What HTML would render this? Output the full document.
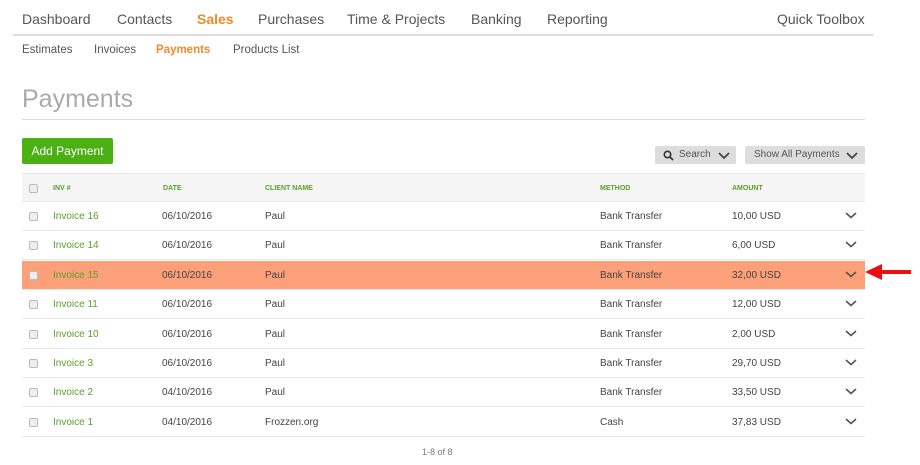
<!DOCTYPE html>
<html><head><meta charset="utf-8"><style>
*{margin:0;padding:0;box-sizing:border-box}
body{width:920px;height:465px;background:#fff;font-family:"Liberation Sans",sans-serif;color:#555;position:relative;overflow:hidden}
.a{position:absolute;white-space:nowrap}
.nav{top:11px;font-size:14px;color:#555}
.sub{top:44px;font-size:11.5px;color:#555}
.or{color:#f08a2e;font-weight:bold}
.row{position:absolute;left:22px;width:843px;height:29px;border-bottom:1.5px solid #e8e8e8;font-size:10px;color:#444}
.row span{position:absolute;top:9px}
.cb{position:absolute;left:7px;top:10px;width:9px;height:9px;border:1px solid #bbb;border-radius:2px;background:#eee}
.g{color:#5aa02c}
.chev{position:absolute;left:823px;top:8px}
.h span{font-size:7px;font-weight:bold;color:#5aa02c;top:11px}
</style></head><body>
<div class="a nav" style="left:22px">Dashboard</div>
<div class="a nav" style="left:117px">Contacts</div>
<div class="a nav or" style="left:197px">Sales</div>
<div class="a nav" style="left:258px">Purchases</div>
<div class="a nav" style="left:347px">Time &amp; Projects</div>
<div class="a nav" style="left:471px">Banking</div>
<div class="a nav" style="left:547px">Reporting</div>
<div class="a nav" style="left:777px">Quick Toolbox</div>
<div class="a" style="left:13px;top:34px;width:860px;height:2px;background:#ddd"></div>
<div class="a sub" style="left:22px">Estimates</div>
<div class="a sub" style="left:94px">Invoices</div>
<div class="a sub or" style="left:156px">Payments</div>
<div class="a sub" style="left:233px">Products List</div>
<div class="a" style="left:22px;top:85px;font-size:25px;color:#aaa">Payments</div>
<div class="a" style="left:22px;top:119px;width:843px;height:1px;background:#ddd"></div>
<div class="a" style="left:22px;top:138px;width:91px;height:26px;background:#4caf14;border-radius:2px;color:#fff;font-size:12px;line-height:26px;text-align:center">Add Payment</div>
<div class="a" style="left:655px;top:146px;width:81px;height:18px;background:#ddd;border-radius:2px;font-size:10px;line-height:18px;color:#555;padding-left:24px">Search
<svg style="position:absolute;left:8px;top:4px" width="11" height="11"><circle cx="4.5" cy="4.5" r="3.2" stroke="#333" stroke-width="1.6" fill="none"/><path d="M7 7 L10 10" stroke="#333" stroke-width="1.8"/></svg>
<svg style="position:absolute;left:63px;top:5px" width="12" height="9"><path d="M1 2 L6 7 L11 2" stroke="#444" stroke-width="1.8" fill="none"/></svg></div>
<div class="a" style="left:745px;top:146px;width:120px;height:18px;background:#ddd;border-radius:2px;font-size:10px;line-height:18px;color:#555;padding-left:9px">Show All Payments
<svg style="position:absolute;left:101px;top:5px" width="12" height="9"><path d="M1 2 L6 7 L11 2" stroke="#444" stroke-width="1.8" fill="none"/></svg></div>
<div class="row h" style="top:173px;height:29px;background:#f5f5f5;border-top:1.5px solid #e8e8e8">
<div class="cb"></div><span style="left:31px">INV #</span><span style="left:141px">DATE</span><span style="left:243px">CLIENT NAME</span><span style="left:578px">METHOD</span><span style="left:710px">AMOUNT</span></div>
<div id="rows"></div>
<div class="a" style="left:422px;top:447px;font-size:9px;color:#777">1-8 of 8</div>
<svg class="a" style="left:862px;top:262px" width="52" height="22"><path d="M3 10 L20 2 L20 8 L49 8 L49 12 L20 12 L20 18 Z" fill="#e81010"/></svg>
<script>
var d=[["Invoice 16","06/10/2016","Paul","Bank Transfer","10,00 USD"],["Invoice 14","06/10/2016","Paul","Bank Transfer","6,00 USD"],["Invoice 15","06/10/2016","Paul","Bank Transfer","32,00 USD"],["Invoice 11","06/10/2016","Paul","Bank Transfer","12,00 USD"],["Invoice 10","06/10/2016","Paul","Bank Transfer","2,00 USD"],["Invoice 3","06/10/2016","Paul","Bank Transfer","29,70 USD"],["Invoice 2","04/10/2016","Paul","Bank Transfer","33,50 USD"],["Invoice 1","04/10/2016","Frozzen.org","Cash","37,83 USD"]];
var h="";d.forEach(function(r,i){var t=202+i*29.4;
h+='<div class="row" style="top:'+t+'px;'+(i==2?'background:#fca07a;':'')+'"><div class="cb"></div><span class="g" style="left:31px">'+r[0]+'</span><span style="left:140px">'+r[1]+'</span><span style="left:243px">'+r[2]+'</span><span style="left:578px">'+r[3]+'</span><span style="left:710px">'+r[4]+'</span><svg class="chev" width="12" height="10"><path d="M1 3 L6 7.5 L11 3" stroke="#555" stroke-width="1.6" fill="none"/></svg></div>';});
document.getElementById("rows").innerHTML=h;
</script>
</body></html>
